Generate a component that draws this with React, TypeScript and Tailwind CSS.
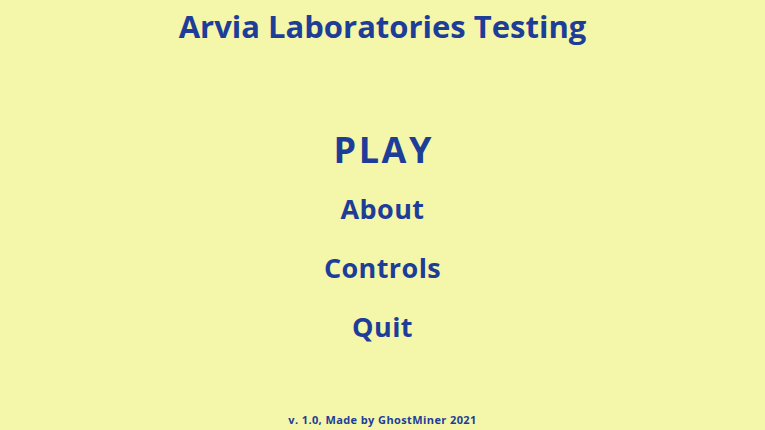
export default function App() {
  const font = { fontFamily: '"Open Sans", "Noto Sans", sans-serif' };
  return (
    <div className="w-[765px] h-[430px] bg-[#f4f7a9] text-[#1e3d98] flex flex-col items-center overflow-hidden" style={font}>
      <h1 className="mt-[6px] text-[31px] leading-[40px] font-bold">Arvia Laboratories Testing</h1>
      <div className="mt-[84px] flex flex-col items-center">
        <div className="text-[36px] leading-[40px] font-bold tracking-[2.5px] pl-[2.5px]">PLAY</div>
        <div className="mt-[19px] text-[27px] leading-[40px] font-bold tracking-[0.4px]">About</div>
        <div className="mt-[19px] text-[27px] leading-[40px] font-bold tracking-[0.4px]">Controls</div>
        <div className="mt-[19px] text-[27px] leading-[40px] font-bold tracking-[0.4px]">Quit</div>
      </div>
      <div className="mt-auto mb-[3px] text-[11px] leading-[14px] font-bold tracking-[0.4px]">v. 1.0, Made by GhostMiner 2021</div>
    </div>
  );
}
